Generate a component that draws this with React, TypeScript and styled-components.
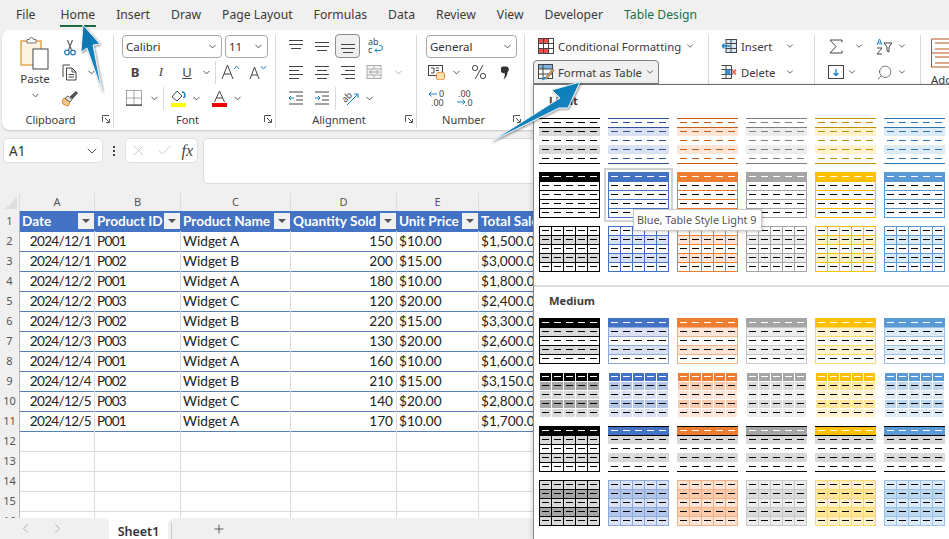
import { FC, ReactNode } from "react";
import styled, { createGlobalStyle } from "styled-components";
import { ChevronDown, ChevronLeft, ChevronRight, Plus, Check, X, Search } from "lucide-react";

const GlobalStyle = createGlobalStyle`
    html, body {
        margin: 0;
        padding: 0;
        background: #f0f0f0;
    }
`

const Page = styled.div`
    position: relative;
    width: 949px;
    height: 539px;
    overflow: hidden;
    background: #f0f0f0;
    font-family: "Noto Sans", "Open Sans", sans-serif;
    color: #333;
    display: flex;
    flex-direction: column;
    svg {
        flex: none;
    }
`

/* menu tabs */

const MenuBar = styled.div`
    display: flex;
    height: 30px;
    flex: none;
    align-items: center;
    padding-left: 16px;
    gap: 21px;
    font-size: 12.2px;
`

const MenuItem = styled.div<{ $active?: boolean; $green?: boolean; $first?: boolean }>`
    position: relative;
    line-height: 30px;
    margin-right: ${(p) => (p.$first ? "4px" : "0")};
    color: ${(p) => (p.$green ? "#1c7145" : "#3a3a3a")};
    &::after {
        content: "";
        display: ${(p) => (p.$active ? "block" : "none")};
        position: absolute;
        left: -1px;
        right: -1px;
        bottom: 3px;
        height: 2px;
        background: #1c6b40;
    }
`

/* ribbon */

const Ribbon = styled.div`
    display: flex;
    flex: none;
    height: 100px;
    margin-left: 2px;
    background: #fff;
    border-radius: 8px 0 0 8px;
    box-shadow: 0 1px 2px rgba(0, 0, 0, 0.18);
    overflow: hidden;
`

const Group = styled.div<{ $w: number; $last?: boolean }>`
    position: relative;
    width: ${(p) => p.$w}px;
    flex: none;
    display: flex;
    flex-direction: column;
    margin: 5px 0 2px;
    box-sizing: border-box;
    border-right: ${(p) => (p.$last ? "none" : "1px solid #d9d9d9")};
`

const GroupBody = styled.div<{ $pad?: number }>`
    flex: 1;
    display: flex;
    flex-direction: column;
    margin-top: -2px;
    padding-left: ${(p) => p.$pad ?? 0}px;
    min-height: 0;
`

const GroupFoot = styled.div`
    display: grid;
    grid-template-columns: 1fr auto 1fr;
    align-items: center;
    height: 18px;
    padding-right: 14px;
    font-size: 11px;
    color: #3c3c3c;
`

const Launcher = styled.div`
    justify-self: end;
    width: 8px;
    height: 8px;
    margin-right: -11px;
    display: flex;
`

const Row = styled.div<{ $h?: number }>`
    display: flex;
    align-items: center;
    height: ${(p) => p.$h ?? 26}px;
    flex: none;
`

const Cell = styled.div<{ $w?: number; $on?: boolean }>`
    width: ${(p) => p.$w ?? 26}px;
    height: 24px;
    flex: none;
    display: flex;
    align-items: center;
    justify-content: center;
    box-sizing: border-box;
    font-size: 13px;
    color: #444;
    border-radius: 4px;
    ${(p) => (p.$on ? "background:#f0f0f0;border:1px solid #8c8c8c;" : "")}
`

const Sep = styled.div`
    width: 1px;
    height: 23px;
    background: #d9d9d9;
    flex: none;
`

const Combo = styled.div<{ $w: number }>`
    width: ${(p) => p.$w}px;
    height: 23px;
    margin-right: 3px;
    box-sizing: border-box;
    border: 1px solid #a8a8a8;
    border-radius: 4px;
    display: flex;
    align-items: center;
    justify-content: space-between;
    padding: 0 3px;
    font-size: 11.5px;
    color: #333;
    flex: none;
`

const PasteBox = styled.div`
    width: 50px;
    margin-left: 8px;
    display: flex;
    flex-direction: column;
    align-items: center;
    font-size: 11.5px;
    color: #3c3c3c;
    padding-top: 4px;
`

const PasteCaption = styled.span`
    line-height: 16px;
    margin: 1px 0 3px;
`

const ClipColumn = styled.div`
    display: flex;
    flex-direction: column;
    padding-top: 2px;
`

const ClipRows = styled.div`
    display: flex;
`

const StyleButton = styled.div<{ $on?: boolean }>`
    display: flex;
    align-items: center;
    gap: ${(p) => (p.$on ? "3px" : "4px")};
    height: ${(p) => (p.$on ? "24px" : "26px")};
    margin-top: ${(p) => (p.$on ? "1px" : "0")};
    box-sizing: border-box;
    width: ${(p) => (p.$on ? "126px" : "auto")};
    padding-left: 4px;
    font-size: 11.3px;
    color: #3a3a3a;
    border-radius: 4px 4px 0 0;
    ${(p) => (p.$on ? "background:#f0f0f0;border:1px solid #7f7f7f;" : "border:1px solid transparent;")}
`

const CellsRow = styled.div`
    display: grid;
    grid-template-columns: 16px 40px 12px;
    align-items: center;
    column-gap: 4px;
    height: 26px;
    padding-left: 12px;
    font-size: 11.3px;
    color: #3a3a3a;
`

const AddIns = styled.div`
    padding: 5px 0 0 10px;
    font-size: 11.3px;
    color: #3a3a3a;
    display: flex;
    flex-direction: column;
    gap: 4px;
    white-space: nowrap;
`

/* formula bar */

const FormulaBar = styled.div`
    display: flex;
    flex: none;
    height: 46px;
    margin-top: 8px;
    padding-left: 3px;
`

const NameBox = styled.div`
    width: 100px;
    height: 25px;
    box-sizing: border-box;
    background: #fff;
    border: 1px solid #e0e0e0;
    border-radius: 5px;
    display: flex;
    align-items: center;
    justify-content: space-between;
    padding: 0 2px 0 5px;
    font-size: 13.5px;
    color: #333;
`

const Dots = styled.div`
    width: 22px;
    height: 25px;
    display: flex;
    flex-direction: column;
    align-items: center;
    justify-content: center;
    gap: 2px;
`

const Dot = styled.span`
    width: 2px;
    height: 2px;
    background: #444;
`

const FxBox = styled.div`
    width: 73px;
    height: 25px;
    box-sizing: border-box;
    background: #fff;
    border: 1px solid #e0e0e0;
    border-radius: 5px;
    display: flex;
    align-items: center;
    justify-content: space-between;
    padding: 0 4px 0 4px;
`

const FxLabel = styled.span`
    font-family: "Liberation Serif", serif;
    font-style: italic;
    font-size: 16px;
    color: #444;
`

const FormulaInput = styled.div`
    flex: 1;
    margin-left: 5px;
    background: #fff;
    border: 1px solid #dcdcdc;
    border-radius: 5px 0 0 5px;
`

/* sheet */

const Sheet = styled.div`
    flex: 1;
    min-height: 0;
    margin-top: 9px;
    overflow: hidden;
    background: #fff;
    font-family: Lato, "Liberation Sans", sans-serif;
    font-size: 13.6px;
    color: #222;
`

const COLUMNS = "20px 75px 86px 110px 106px 82px 130px"

const SheetRow = styled.div<{ $head?: boolean }>`
    display: grid;
    grid-template-columns: ${COLUMNS};
    height: ${(p) => (p.$head ? "18px" : "20px")};
    line-height: ${(p) => (p.$head ? "18px" : "20px")};
`

const ColHead = styled.div`
    background: #f0f0f0;
    text-align: center;
    font-family: "Noto Sans", sans-serif;
    font-size: 11px;
    color: #555;
    border-right: 1px solid #dcdcdc;
    border-bottom: 1px solid #c0c0c0;
    box-sizing: border-box;
`

const RowHead = styled.div`
    background: #f0f0f0;
    text-align: center;
    font-family: "Noto Sans", sans-serif;
    font-size: 11px;
    color: #555;
    border-right: 1px solid #b5b5b5;
    border-bottom: 1px solid #dcdcdc;
    box-sizing: border-box;
`

const Corner = styled(ColHead)`
    display: flex;
    align-items: flex-end;
    justify-content: flex-end;
    padding: 0 2px 2px 0;
`

const HeaderCell = styled.div`
    background: #4472c4;
    color: #fff;
    font-weight: 700;
    display: flex;
    align-items: center;
    justify-content: space-between;
    padding: 0 1px 1px 2px;
    white-space: nowrap;
    overflow: hidden;
    box-sizing: border-box;
`

const FilterButton = styled.div`
    width: 16px;
    height: 16px;
    flex: none;
    background: #f0f0f0;
    display: flex;
    align-items: center;
    justify-content: center;
    &::after {
        content: "";
        border: 4px solid transparent;
        border-top: 4px solid #555;
        border-bottom: 0;
    }
`

const DataCell = styled.div<{ $right?: boolean; $blue?: boolean; $tight?: boolean }>`
    padding: 0 3px 0 2px;
    box-sizing: border-box;
    text-align: ${(p) => (p.$right ? "right" : "left")};
    letter-spacing: ${(p) => (p.$tight ? "-0.7px" : "0")};
    border-right: 1px solid #dcdcdc;
    border-bottom: 1px solid ${(p) => (p.$blue ? "#5a7fbd" : "#dcdcdc")};
    white-space: nowrap;
    overflow: hidden;
`

/* sheet tabs */

const TabBar = styled.div`
    display: flex;
    flex: none;
    height: 21px;
    background: #fff;
    font-size: 12.5px;
`

const TabNav = styled.div`
    width: 109px;
    background: #f0f0f0;
    border-radius: 0 6px 0 0;
    display: flex;
    align-items: center;
    padding-left: 18px;
    gap: 17px;
    box-sizing: border-box;
`

const ActiveTab = styled.div`
    width: 59px;
    text-align: center;
    font-weight: 600;
    line-height: 27px;
    color: #333;
`

const TabRest = styled.div`
    flex: 1;
    background: #f0f0f0;
    border-radius: 6px 0 0 0;
    display: flex;
    align-items: center;
    padding-left: 44px;
    position: relative;
    &::before {
        content: "";
        position: absolute;
        left: 3px;
        top: 5px;
        bottom: 0;
        width: 1px;
        background: #c8c8c8;
    }
`

/* format as table gallery */

const Gallery = styled.div`
    position: absolute;
    left: 533px;
    top: 84px;
    right: 0;
    bottom: 0;
    background: #fff;
    border-left: 1px solid #8a8a8a;
    border-top: 1px solid #6f6f6f;
    padding-top: 7px;
    box-shadow: -2px 0 4px rgba(0, 0, 0, 0.12);
`

const GalleryHeading = styled.div`
    height: 26px;
    padding-left: 15px;
    font-size: 11.2px;
    font-weight: 700;
    line-height: 18px;
    color: #3c3c3c;
`

const TileGrid = styled.div`
    display: grid;
    grid-template-columns: repeat(6, 61px);
    grid-auto-rows: 46px;
    gap: 8px;
    padding-left: 5px;
`

const Divider = styled.div`
    height: 2px;
    background: #dcdcdc;
    margin: 13px 0 5px;
`

const Tile = styled.div<{ $hover?: boolean }>`
    position: relative;
    width: 61px;
    height: 46px;
    ${(p) => (p.$hover ? "outline: 2px solid #d2d2d2; outline-offset: 2px;" : "")}
`

const Tooltip = styled.div`
    position: absolute;
    left: 25px;
    top: 37px;
    z-index: 2;
    width: 129px;
    height: 22px;
    box-sizing: border-box;
    background: #fff;
    border: 1px solid #c8c8c8;
    box-shadow: 1px 1px 3px rgba(0, 0, 0, 0.2);
    font-size: 10.8px;
    line-height: 20px;
    padding-left: 3px;
    color: #555;
    white-space: nowrap;
`

const ArrowLayer = styled.svg`
    position: absolute;
    left: 0;
    top: 0;
    pointer-events: none;
    z-index: 5;
`

/* swatches */

type Tone = { accent: string; dash: string; tint: string; tint2: string; soft: string }

const TONES: Tone[] = [
    { accent: "#000000", dash: "#000000", tint: "#d9d9d9", tint2: "#a6a6a6", soft: "#000000" },
    { accent: "#4472c4", dash: "#2f5597", tint: "#d9e1f2", tint2: "#b4c6e7", soft: "#8ea9db" },
    { accent: "#ed7d31", dash: "#c55a11", tint: "#fce4d6", tint2: "#f8cbad", soft: "#f4b084" },
    { accent: "#a5a5a5", dash: "#7f7f7f", tint: "#ededed", tint2: "#dbdbdb", soft: "#c9c9c9" },
    { accent: "#ffc000", dash: "#bf8f00", tint: "#fff2cc", tint2: "#ffe699", soft: "#ffd966" },
    { accent: "#5b9bd5", dash: "#2e75b6", tint: "#ddebf7", tint2: "#bdd7ee", soft: "#9bc2e6" },
]

type Kind = "lines" | "boxed" | "grid" | "banded" | "blocks" | "header" | "solid" | "gridHead"

const ROW_Y = [0, 9, 18, 27, 36]
const DASH_X = [3, 15, 27, 39, 51]

const Dashes: FC<{ row: number; color: string }> = ({ row, color }) => (
    <>
        {DASH_X.map((x) => (
            <rect key={x} x={x} y={ROW_Y[row] + 4} width={7} height={1} fill={color} />
        ))}
    </>
)

const HLine: FC<{ y: number; color: string }> = ({ y, color }) => <rect x={0} y={y} width={61} height={1} fill={color} />

const GridLines: FC<{ color: string }> = ({ color }) => (
    <>
        {[0, 9, 18, 27, 36, 45].map((y) => (
            <rect key={y} x={0} y={y} width={61} height={1} fill={color} />
        ))}
        {[0, 12, 24, 36, 48, 60].map((x) => (
            <rect key={x} x={x} y={0} width={1} height={46} fill={color} />
        ))}
    </>
)

const GridLinesRows: FC<{ color: string }> = ({ color }) => (
    <>
        {[0, 9, 18, 27, 36, 45].map((y) => (
            <rect key={y} x={0} y={y} width={61} height={1} fill={color} />
        ))}
        <rect x={0} y={0} width={1} height={46} fill={color} />
        <rect x={60} y={0} width={1} height={46} fill={color} />
    </>
)

const Swatch: FC<{ kind: Kind; tone: Tone }> = ({ kind, tone }) => {
    const rows = [0, 1, 2, 3, 4]
    const band = (row: number, color: string) => <rect key={row} x={0} y={ROW_Y[row]} width={61} height={9} fill={color} />
    const gray = tone.accent === "#000000" || kind === "header"
    return (
        <svg width={61} height={46} viewBox="0 0 61 46">
            {kind === "lines" && (
                <>
                    {band(1, tone.tint)}
                    {band(3, tone.tint)}
                    <HLine y={0} color={tone.dash} />
                    <HLine y={9} color={tone.dash} />
                    <HLine y={45} color={tone.dash} />
                    {rows.map((r) => <Dashes key={r} row={r} color={tone.dash} />)}
                </>
            )}
            {kind === "boxed" && (
                <>
                    {band(0, tone.accent)}
                    <GridLinesRows color={tone.accent} />
                    <Dashes row={0} color="#fff" />
                    {rows.slice(1).map((r) => <Dashes key={r} row={r} color="#000" />)}
                </>
            )}
            {(kind === "grid" || kind === "gridHead") && (
                <>
                    {band(1, tone.tint)}
                    {band(3, tone.tint)}
                    {kind === "gridHead" && band(0, tone.accent)}
                    <GridLines color={tone.accent} />
                    <Dashes row={0} color={kind === "gridHead" ? "#fff" : "#000"} />
                    {rows.slice(1).map((r) => <Dashes key={r} row={r} color="#000" />)}
                </>
            )}
            {kind === "banded" && (
                <>
                    {band(1, tone.tint)}
                    {band(3, tone.tint)}
                    <GridLinesRows color={tone.soft} />
                    {band(0, tone.accent)}
                    <Dashes row={0} color="#fff" />
                    {rows.slice(1).map((r) => <Dashes key={r} row={r} color="#000" />)}
                </>
            )}
            {kind === "blocks" && (
                <>
                    {band(0, tone.accent)}
                    {band(1, tone.tint2)}
                    {band(2, tone.tint)}
                    {band(3, tone.tint2)}
                    {band(4, tone.tint)}
                    <GridLines color="#fff" />
                    <Dashes row={0} color="#fff" />
                    {rows.slice(1).map((r) => <Dashes key={r} row={r} color="#000" />)}
                </>
            )}
            {kind === "header" && (
                <>
                    {band(0, tone.accent)}
                    {band(1, gray ? "#d9d9d9" : tone.tint)}
                    {band(3, gray ? "#d9d9d9" : tone.tint)}
                    <HLine y={0} color="#000" />
                    <HLine y={9} color="#000" />
                    <HLine y={45} color="#000" />
                    <Dashes row={0} color="#fff" />
                    {rows.slice(1).map((r) => <Dashes key={r} row={r} color="#000" />)}
                </>
            )}
            {kind === "solid" && (
                <>
                    {band(0, tone.tint)}
                    {band(1, tone.tint2)}
                    {band(2, tone.tint)}
                    {band(3, tone.tint2)}
                    {band(4, tone.tint)}
                    <GridLines color={tone.soft} />
                    {rows.map((r) => <Dashes key={r} row={r} color="#000" />)}
                </>
            )}
        </svg>
    )
}

const LIGHT_ROWS: Kind[] = ["lines", "boxed", "grid"]
const MEDIUM_ROWS: Kind[] = ["banded", "blocks", "header", "solid"]

/* icons */

const Chev: FC<{ size?: number; color?: string }> = ({ size = 11, color = "#444" }) => (
    <ChevronDown size={size} color={color} strokeWidth={2} />
)

const Lines: FC<{ rows: [number, number, number][]; color?: string }> = ({ rows, color = "#444" }) => (
    <svg width={16} height={16} viewBox="0 0 16 16">
        {rows.map(([x, w, y]) => (
            <rect key={y} x={x} y={y} width={w} height={1} fill={color} />
        ))}
    </svg>
)

const LauncherIcon: FC = () => (
    <Launcher>
        <svg width={8} height={8} viewBox="0 0 8 8">
            <path d="M0.500 7V0.500H7M3 3L7 7M7.500 4V7.500H4" fill="none" stroke="#555" strokeWidth={1} />
        </svg>
    </Launcher>
)

const PasteIcon: FC = () => (
    <svg width={30} height={33} viewBox="0 0 30 33">
        <rect x="1" y="4" width="20" height="24" fill="#fdf3e1" stroke="#e3a64f" strokeWidth="1.500" />
        <path d="M7 6V2.500h2.500a2 2 0 0 1 4 0H16V6z" fill="#fff" stroke="#777" strokeWidth="1" />
        <rect x="13" y="12" width="15" height="20" fill="#fff" stroke="#444" strokeWidth="1" />
    </svg>
)

const ScissorsIcon: FC = () => (
    <svg width={12} height={17} viewBox="0 0 12 17">
        <path d="M3.500 1L7.500 11M8.500 1L4.500 11" fill="none" stroke="#555" strokeWidth="1.100" />
        <circle cx="3" cy="13.500" r="2.300" fill="none" stroke="#2b7cb8" strokeWidth="1.300" />
        <circle cx="9" cy="13.500" r="2.300" fill="none" stroke="#2b7cb8" strokeWidth="1.300" />
    </svg>
)

const CopyIcon: FC = () => (
    <svg width={16} height={17} viewBox="0 0 16 17">
        <path d="M1 13V1h7" fill="none" stroke="#444" />
        <path d="M4.500 16V4H10l4 4v8z M10 4v4h4 M6.500 10.500h5.500 M6.500 13h5.500" fill="#fff" stroke="#444" />
    </svg>
)

const PainterIcon: FC = () => (
    <svg width={17} height={17} viewBox="0 0 17 17">
        <path d="M2 8L8 13L6 16L3 15L1 14L0.500 10z" fill="#f7c98f" stroke="#e08a2e" />
        <path d="M3 8L8 12L10 9.500L6 6z" fill="#e9e9e9" stroke="#666" />
        <path d="M8 7L14 1.500L15.500 3L10 9" fill="#555" stroke="#444" />
    </svg>
)

const BorderIcon: FC = () => (
    <svg width={16} height={16} viewBox="0 0 16 16">
        <path d="M0.500 0.500H15.500V15M0.500 0.500V15M8 0.500V15M0.500 8H15.500" fill="none" stroke="#555" strokeDasharray="1 1" />
        <rect x="0" y="14.500" width="16" height="1.200" fill="#222" />
    </svg>
)

const FillIcon: FC = () => (
    <svg width={17} height={17} viewBox="0 0 17 17">
        <path d="M7 1L2 7L7 11L12 6z" fill="#fff" stroke="#444" />
        <path d="M12 2c2 0 3 2 3 4l-1.500 2" fill="none" stroke="#1584c4" strokeWidth="1.500" />
        <rect x="1" y="13" width="15" height="4" fill="#ffff00" />
    </svg>
)

const FontColorIcon: FC = () => (
    <svg width={17} height={17} viewBox="0 0 17 17">
        <path d="M3.500 12L8.500 1L13.500 12M5.500 8H11.500" fill="none" stroke="#444" strokeWidth="1" />
        <rect x="1" y="13" width="15" height="4" fill="#f00000" />
    </svg>
)

const GrowIcon: FC<{ up?: boolean }> = ({ up }) => (
    <svg width={19} height={16} viewBox="0 0 19 16">
        <path d={up ? "M1 15L6.500 1L12 15M3 10H10" : "M2 15L6.500 3L11 15M3.500 11H9.500"} fill="none" stroke="#444" />
        <path d={up ? "M13 5L15.500 2L18 5" : "M13 2L15.500 5L18 2"} fill="none" stroke="#2b88c8" />
    </svg>
)

const WrapIcon: FC = () => (
    <svg width={17} height={17} viewBox="0 0 17 17">
        <text x="1" y="7" fontSize="9" fontFamily="Noto Sans" fill="#444">ab</text>
        <text x="1" y="15" fontSize="9" fontFamily="Noto Sans" fill="#444">c</text>
        <path d="M8 12.500h5a2.500 2.500 0 0 0 0-5H12M8 12.500l2-2M8 12.500l2 2" fill="none" stroke="#1584c4" />
    </svg>
)

const MergeIcon: FC = () => (
    <svg width={16} height={16} viewBox="0 0 16 16">
        <rect x="1" y="1.500" width="14" height="13" fill="#f6f6f6" stroke="#aaa" />
        <path d="M1 5H15M1 11H15M8 1.500V5M8 11v3.500" stroke="#aaa" />
        <path d="M3.500 8H12.500M3.500 8L5.500 6.500M3.500 8L5.500 9.500M12.500 8L10.500 6.500M12.500 8L10.500 9.500" fill="none" stroke="#999" />
    </svg>
)

const IndentIcon: FC<{ out?: boolean }> = ({ out }) => (
    <svg width={16} height={16} viewBox="0 0 16 16">
        <path d="M1 2H15M8 6H15M8 10H15M1 14H15" stroke="#444" />
        <path d={out ? "M6 8H1M1 8L3 6M1 8L3 10" : "M1 8H6M6 8L4 6M6 8L4 10"} fill="none" stroke="#1584c4" />
    </svg>
)

const OrientIcon: FC = () => (
    <svg width={18} height={17} viewBox="0 0 18 17">
        <path d="M5 15L16 4M16 4H12M16 4V8" fill="none" stroke="#1584c4" />
        <text x="0" y="11" fontSize="9" fontFamily="Noto Sans" fill="#444" transform="rotate(-45 4 8)">ab</text>
    </svg>
)

const AccountIcon: FC = () => (
    <svg width={17} height={16} viewBox="0 0 17 16">
        <rect x="0.500" y="1.500" width="14" height="10" fill="#fff" stroke="#444" />
        <path d="M3 4h3v5H3M8 4h3M8 6.500h3" fill="none" stroke="#444" />
        <ellipse cx="12.500" cy="10" rx="4" ry="1.800" fill="#fbe0b0" stroke="#e08a2e" />
        <path d="M8.500 10v4.500a4 1.500 0 0 0 8 0V10" fill="#fbe0b0" stroke="#e08a2e" />
    </svg>
)

const DecimalIcon: FC<{ more?: boolean }> = ({ more }) => (
    <svg width={18} height={18} viewBox="0 0 18 18">
        {more ? (
            <>
                <text x="2" y="8" fontSize="9" fontFamily="Noto Sans" fill="#444">.00</text>
                <text x="9" y="17" fontSize="9" fontFamily="Noto Sans" fill="#444">.0</text>
                <path d="M1 13H9M9 13L6.500 10.500M9 13L6.500 15.500" fill="none" stroke="#1584c4" />
            </>
        ) : (
            <>
                <text x="11" y="8" fontSize="9" fontFamily="Noto Sans" fill="#444">0</text>
                <text x="3" y="17" fontSize="9" fontFamily="Noto Sans" fill="#444">.00</text>
                <path d="M9 5H1M1 5L3.500 2.500M1 5L3.500 7.500" fill="none" stroke="#1584c4" />
            </>
        )}
    </svg>
)

const CondIcon: FC = () => (
    <svg width={16} height={16} viewBox="0 0 16 16">
        <rect x="0.500" y="0.500" width="15" height="15" fill="#fff" stroke="#444" />
        <rect x="1" y="1" width="9" height="4.500" fill="#ef4f4f" />
        <rect x="1" y="10.500" width="9" height="4.500" fill="#ef4f4f" />
        <path d="M5.500 0.500V15.500M10.500 0.500V15.500M0.500 5.500H15.500M0.500 10.500H15.500" stroke="#444" />
    </svg>
)

const TableBrushIcon: FC = () => (
    <svg width={17} height={17} viewBox="0 0 17 17">
        <rect x="0.500" y="0.500" width="14" height="14" fill="#fff" stroke="#444" />
        <rect x="1" y="1" width="13" height="4" fill="#7fb2de" />
        <path d="M5 0.500V14.500M0.500 5H14.500M0.500 10H14.500" stroke="#444" />
        <path d="M7 14L14.500 5L16 6.500L9 15z" fill="#e1a35e" stroke="#555" strokeWidth="0.700" />
        <path d="M4 16.500C4 13 6 12.500 8 13.500L8 15z" fill="#3a8cc4" />
    </svg>
)

const InsertIcon: FC = () => (
    <svg width={16} height={14} viewBox="0 0 16 14">
        <rect x="5" y="0.500" width="10.500" height="13" fill="#d7e8f6" stroke="#444" />
        <path d="M5 4.500H15.500M5 9.500H15.500M10 0.500V13.500" stroke="#444" />
        <path d="M9 7H1M1 7L3.500 4.500M1 7L3.500 9.500" fill="none" stroke="#1584c4" strokeWidth="1.300" />
    </svg>
)

const DeleteIcon: FC = () => (
    <svg width={16} height={14} viewBox="0 0 16 14">
        <path d="M0.500 0.500H10.500V13.500H0.500M5 0.500V13.500M0.500 4.500H10M0.500 9.500H10" fill="none" stroke="#444" />
        <rect x="4" y="4.500" width="5.500" height="5" fill="#3a8cc4" />
        <path d="M11 4.500L15 9.500M15 4.500L11 9.500" stroke="#e34a4a" strokeWidth="1.300" />
    </svg>
)

const SumIcon: FC = () => (
    <svg width={14} height={15} viewBox="0 0 14 15">
        <path d="M13 3.500V1H1L7 7.500L1 14H13V11.500" fill="none" stroke="#444" />
    </svg>
)

const SortIcon: FC = () => (
    <svg width={17} height={17} viewBox="0 0 17 17">
        <path d="M1 7L3.500 1L6 7M2 5H5" fill="none" stroke="#1584c4" />
        <path d="M1 10H6L1 16H6" fill="none" stroke="#444" />
        <path d="M8 5H16L13 9V14L11 13V9z" fill="#fff" stroke="#444" />
    </svg>
)

const FillDownIcon: FC = () => (
    <svg width={16} height={14} viewBox="0 0 16 14">
        <rect x="0.500" y="0.500" width="15" height="13" fill="#fff" stroke="#444" />
        <path d="M8 4V10.500M8 10.500L5.500 8M8 10.500L10.500 8" fill="none" stroke="#1584c4" strokeWidth="1.300" />
    </svg>
)

const AddInIcon: FC = () => (
    <svg width={22} height={30} viewBox="0 0 22 30">
        <path d="M0.500 1H22M0.500 1V29H22M0.500 15H22M4 5H22M4 11H22M4 19H22M4 25H22" fill="none" stroke="#b7561e" strokeWidth="1.100" />
    </svg>
)

const PercentIcon: FC = () => (
    <svg width={16} height={16} viewBox="0 0 16 16">
        <path d="M12 1L4 15" stroke="#444" />
        <circle cx="4" cy="4" r="2.600" fill="none" stroke="#444" />
        <circle cx="12" cy="12" r="2.600" fill="none" stroke="#444" />
    </svg>
)

const CommaIcon: FC = () => (
    <svg width={9} height={15} viewBox="0 0 9 15">
        <path d="M2 1.500h3.500a3 3 0 0 1 1 5.500C6.500 10 5 13 2.500 14.500C4 11 4 9 3.500 8A3.200 3.200 0 0 1 2 1.500z" fill="#333" />
    </svg>
)

/* data */

const HEADERS = ["Date", "Product ID", "Product Name", "Quantity Sold", "Unit Price", "Total Sales"]
const LETTERS = ["A", "B", "C", "D", "E", "F", ""]

const DATA = [
    ["2024/12/1", "P001", "Widget A", "150", "$10.00", "$1,500.00"],
    ["2024/12/1", "P002", "Widget B", "200", "$15.00", "$3,000.00"],
    ["2024/12/2", "P001", "Widget A", "180", "$10.00", "$1,800.00"],
    ["2024/12/2", "P003", "Widget C", "120", "$20.00", "$2,400.00"],
    ["2024/12/3", "P002", "Widget B", "220", "$15.00", "$3,300.00"],
    ["2024/12/3", "P003", "Widget C", "130", "$20.00", "$2,600.00"],
    ["2024/12/4", "P001", "Widget A", "160", "$10.00", "$1,600.00"],
    ["2024/12/4", "P002", "Widget B", "210", "$15.00", "$3,150.00"],
    ["2024/12/5", "P003", "Widget C", "140", "$20.00", "$2,800.00"],
    ["2024/12/5", "P001", "Widget A", "170", "$10.00", "$1,700.00"],
]

const MENU = ["File", "Home", "Insert", "Draw", "Page Layout", "Formulas", "Data", "Review", "View", "Developer", "Table Design"]

const RibbonGroup: FC<{ w: number; label?: string; launcher?: boolean; last?: boolean; pad?: number; children: ReactNode }> = ({
    w,
    label,
    launcher,
    last,
    pad,
    children,
}) => (
    <Group $w={w} $last={last}>
        <GroupBody $pad={pad}>{children}</GroupBody>
        {label && (
            <GroupFoot>
                <span />
                <span>{label}</span>
                {launcher ? <LauncherIcon /> : <span />}
            </GroupFoot>
        )}
    </Group>
)

const App: FC = () => {
    return (
        <Page>
            <GlobalStyle />
            <MenuBar>
                {MENU.map((m) => (
                    <MenuItem key={m} $first={m === "File"} $active={m === "Home"} $green={m === "Table Design"}>
                        {m}
                    </MenuItem>
                ))}
            </MenuBar>

            <Ribbon>
                <RibbonGroup w={112} label="Clipboard" launcher>
                    <ClipRows>
                        <PasteBox>
                            <PasteIcon />
                            <PasteCaption>Paste</PasteCaption>
                            <Chev />
                        </PasteBox>
                        <ClipColumn>
                            <Cell $w={20}><ScissorsIcon /></Cell>
                            <Row $h={27}>
                                <Cell $w={20}><CopyIcon /></Cell>
                                <Cell $w={6} />
                                <Chev />
                            </Row>
                            <Cell $w={20}><PainterIcon /></Cell>
                        </ClipColumn>
                    </ClipRows>
                </RibbonGroup>

                <RibbonGroup w={162} label="Font" launcher pad={8}>
                    <Row>
                        <Combo $w={100}>Calibri<Chev /></Combo>
                        <Combo $w={43}>11<Chev /></Combo>
                    </Row>
                    <Row>
                        <Cell><b>B</b></Cell>
                        <Cell><i style={{ fontFamily: "Liberation Serif" }}>I</i></Cell>
                        <Cell><u>U</u></Cell>
                        <Cell $w={12}><Chev /></Cell>
                        <Cell $w={3} />
                        <Sep />
                        <Cell $w={28}><GrowIcon up /></Cell>
                        <Cell $w={26}><GrowIcon /></Cell>
                    </Row>
                    <Row>
                        <Cell $w={24}><BorderIcon /></Cell>
                        <Cell $w={16}><Chev /></Cell>
                        <Cell $w={1} />
                        <Sep />
                        <Cell $w={28}><FillIcon /></Cell>
                        <Cell $w={8}><Chev /></Cell>
                        <Cell $w={7} />
                        <Cell $w={24}><FontColorIcon /></Cell>
                        <Cell $w={12}><Chev /></Cell>
                    </Row>
                </RibbonGroup>

                <RibbonGroup w={141} label="Alignment" launcher pad={7}>
                    <Row>
                        <Cell><Lines rows={[[1, 14, 2], [1, 14, 6], [3, 10, 10]]} /></Cell>
                        <Cell><Lines rows={[[1, 14, 4], [1, 14, 8], [3, 10, 12]]} /></Cell>
                        <Cell $w={25} $on><Lines rows={[[1, 14, 6], [1, 14, 10], [3, 10, 14]]} /></Cell>
                        <Cell $w={30}><WrapIcon /></Cell>
                    </Row>
                    <Row>
                        <Cell><Lines rows={[[1, 14, 2], [1, 10, 6], [1, 14, 10], [1, 10, 14]]} /></Cell>
                        <Cell><Lines rows={[[1, 14, 2], [3, 10, 6], [1, 14, 10], [3, 10, 14]]} /></Cell>
                        <Cell><Lines rows={[[1, 14, 2], [5, 10, 6], [1, 14, 10], [5, 10, 14]]} /></Cell>
                        <Cell><MergeIcon /></Cell>
                        <Cell $w={22}><Chev color="#aaa" /></Cell>
                    </Row>
                    <Row>
                        <Cell><IndentIcon out /></Cell>
                        <Cell><IndentIcon /></Cell>
                        <Sep />
                        <Cell $w={30}><OrientIcon /></Cell>
                        <Cell $w={6}><Chev /></Cell>
                    </Row>
                </RibbonGroup>

                <RibbonGroup w={108} label="Number" launcher pad={9}>
                    <Row>
                        <Combo $w={91}>General<Chev /></Combo>
                    </Row>
                    <Row>
                        <Cell $w={21}><AccountIcon /></Cell>
                        <Cell $w={18}><Chev /></Cell>
                        <Cell $w={28}><PercentIcon /></Cell>
                        <Cell $w={24}><CommaIcon /></Cell>
                    </Row>
                    <Row>
                        <Cell $w={21}><DecimalIcon /></Cell>
                        <Cell $w={7} />
                        <Cell $w={21}><DecimalIcon more /></Cell>
                    </Row>
                </RibbonGroup>

                <RibbonGroup w={184} pad={8}>
                    <StyleButton>
                        <CondIcon />
                        <span>Conditional Formatting</span>
                        <Chev size={10} />
                    </StyleButton>
                    <StyleButton $on>
                        <TableBrushIcon />
                        <span>Format as Table</span>
                        <Chev size={10} />
                    </StyleButton>
                </RibbonGroup>

                <RibbonGroup w={106}>
                    <CellsRow>
                        <InsertIcon />
                        <span>Insert</span>
                        <Chev size={10} />
                    </CellsRow>
                    <CellsRow>
                        <DeleteIcon />
                        <span>Delete</span>
                        <Chev size={10} />
                    </CellsRow>
                </RibbonGroup>

                <RibbonGroup w={106} pad={12}>
                    <Row>
                        <Cell $w={18}><SumIcon /></Cell>
                        <Cell $w={28}><Chev size={10} /></Cell>
                        <Cell $w={22}><SortIcon /></Cell>
                        <Cell $w={14}><Chev size={10} /></Cell>
                    </Row>
                    <Row>
                        <Cell $w={18}><FillDownIcon /></Cell>
                        <Cell $w={14}><Chev size={10} /></Cell>
                        <Cell $w={14} />
                        <Cell $w={22}><Search size={17} color="#444" strokeWidth={1} style={{ transform: "scaleX(-1)" }} /></Cell>
                        <Cell $w={14}><Chev size={10} /></Cell>
                    </Row>
                </RibbonGroup>

                <RibbonGroup w={30} last>
                    <AddIns>
                        <AddInIcon />
                        <span>Add</span>
                    </AddIns>
                </RibbonGroup>
            </Ribbon>

            <FormulaBar>
                <NameBox>
                    A1
                    <ChevronDown size={16} color="#555" strokeWidth={1.5} />
                </NameBox>
                <Dots>
                    <Dot /><Dot /><Dot />
                </Dots>
                <FxBox>
                    <X size={17} color="#c4c4c4" strokeWidth={1.2} />
                    <Check size={17} color="#c4c4c4" strokeWidth={1.2} />
                    <FxLabel>fx</FxLabel>
                </FxBox>
                <FormulaInput />
            </FormulaBar>

            <Sheet>
                <SheetRow $head>
                    <Corner>
                        <svg width={12} height={12} viewBox="0 0 12 12"><path d="M12 0V12H0z" fill="#dedede" /></svg>
                    </Corner>
                    {LETTERS.map((l) => <ColHead key={l}>{l}</ColHead>)}
                </SheetRow>
                <SheetRow>
                    <RowHead>1</RowHead>
                    {HEADERS.map((h) => (
                        <HeaderCell key={h}>
                            {h}
                            <FilterButton />
                        </HeaderCell>
                    ))}
                    <DataCell />
                </SheetRow>
                {DATA.map((row, i) => (
                    <SheetRow key={i}>
                        <RowHead>{i + 2}</RowHead>
                        {row.map((c, j) => (
                            <DataCell key={j} $right={j === 0 || j === 3} $tight={j === 0 || j === 1} $blue>{c}</DataCell>
                        ))}
                        <DataCell />
                    </SheetRow>
                ))}
                {[12, 13, 14, 15, 16].map((n) => (
                    <SheetRow key={n}>
                        <RowHead>{n}</RowHead>
                        {LETTERS.map((l) => <DataCell key={l} />)}
                    </SheetRow>
                ))}
            </Sheet>

            <TabBar>
                <TabNav>
                    <ChevronLeft size={15} color="#aaa" strokeWidth={1.5} />
                    <ChevronRight size={15} color="#aaa" strokeWidth={1.5} />
                </TabNav>
                <ActiveTab>Sheet1</ActiveTab>
                <TabRest>
                    <Plus size={14} color="#444" strokeWidth={1.4} />
                </TabRest>
            </TabBar>

            <Gallery>
                <GalleryHeading>Light</GalleryHeading>
                <TileGrid>
                    {LIGHT_ROWS.flatMap((kind) =>
                        TONES.map((tone, i) => {
                            const hover = kind === "boxed" && i === 1
                            return (
                                <Tile key={kind + i} $hover={hover}>
                                    <Swatch kind={kind} tone={tone} />
                                    {hover && <Tooltip>Blue, Table Style Light 9</Tooltip>}
                                </Tile>
                            )
                        })
                    )}
                </TileGrid>
                <Divider />
                <GalleryHeading>Medium</GalleryHeading>
                <TileGrid>
                    {MEDIUM_ROWS.flatMap((kind) =>
                        TONES.map((tone, i) => (
                            <Tile key={kind + i}>
                                <Swatch kind={kind === "header" && i === 0 ? "gridHead" : kind} tone={tone} />
                            </Tile>
                        ))
                    )}
                </TileGrid>
            </Gallery>

            <ArrowLayer width={949} height={539} viewBox="0 0 949 539">
                <defs>
                    <linearGradient id="arrowFill" x1="0" y1="0" x2="1" y2="1">
                        <stop offset="0" stopColor="#0b6fa8" />
                        <stop offset="1" stopColor="#1790cc" />
                    </linearGradient>
                    <filter id="arrowShadow" x="-30%" y="-30%" width="160%" height="160%">
                        <feDropShadow dx="1" dy="1" stdDeviation="1.200" floodColor="#000" floodOpacity="0.45" />
                    </filter>
                </defs>
                <g filter="url(#arrowShadow)" fill="url(#arrowFill)" stroke="#e8f2f8" strokeWidth="1" strokeLinejoin="round">
                    <path d="M83 25L100 44L93 45L102 91L87 48L81 52z" />
                    <path d="M580 82L552 90L560 98L492 141L559 108L568 108z" />
                </g>
            </ArrowLayer>
        </Page>
    )
}

export default App
